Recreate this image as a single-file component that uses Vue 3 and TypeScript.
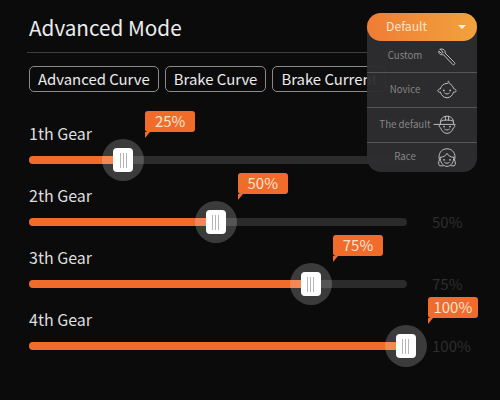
<script setup lang="ts">
interface Gear {
  name: string
  value: number
  pos: number
}

const tabs: string[] = ['Advanced Curve', 'Brake Curve', 'Brake Current']

const gears: Gear[] = [
  { name: '1th Gear', value: 25, pos: 24.9 },
  { name: '2th Gear', value: 50, pos: 49.4 },
  { name: '3th Gear', value: 75, pos: 74.6 },
  { name: '4th Gear', value: 100, pos: 99.7 },
]
</script>

<template>
  <div class="screen">
    <h1 class="title">Advanced Mode</h1>
    <div class="rule"></div>

    <div class="tabs">
      <span v-for="tab in tabs" :key="tab" class="tab">{{ tab }}</span>
    </div>

    <div class="gears">
      <div v-for="gear in gears" :key="gear.name" class="gear">
        <div class="gear-name">{{ gear.name }}</div>
        <div class="gear-line">
          <div class="track">
            <div class="fill" :style="{ width: gear.pos + '%' }"></div>
            <div class="knob" :style="{ left: gear.pos + '%' }">
              <div class="bubble">{{ gear.value }}%</div>
              <div class="halo"></div>
              <div class="grip"><i></i><i></i><i></i></div>
            </div>
          </div>
          <div class="readout">{{ gear.value }}%</div>
        </div>
      </div>
    </div>

    <div class="menu">
      <div class="menu-head">
        <span class="menu-head-text">Default</span>
        <b class="caret"></b>
      </div>
      <div class="menu-row first">
        <span class="menu-label">Custom</span>
        <svg class="icon" viewBox="0 0 20 20">
          <path d="M3.2 2.2 L6.2 5 L4.8 6.6 L1.8 4 C1.4 6.6 3.6 8.6 6.4 7.6 L15.6 17.4 C16.8 18.5 18.6 16.8 17.5 15.6 L8 6 C8.9 3.4 6.2 1.2 3.2 2.2 Z" />
        </svg>
      </div>
      <div class="menu-row">
        <span class="menu-label">Novice</span>
        <svg class="icon" viewBox="0 0 20 20">
          <path d="M3.4 8.6 C4.4 5.4 6.8 3.4 10 3.4 C10.9 3.4 12.2 3 12 1.8 C11.9 1 10.8 1 10.6 1.8 M3.4 8.6 C1.8 8.8 0.6 10 1 11.2 C1.3 12.2 2.4 12.4 3.4 12 C4.4 15.6 7 17.8 10 17.8 C13 17.8 15.6 15.6 16.6 12 C17.6 12.4 18.8 12.2 19 11.2 C19.3 10 18.2 8.8 16.6 8.6 C16 6.4 14.8 4.6 12.6 3.6" />
          <path d="M7.6 13 C8.8 14.4 11.2 14.4 12.4 13" />
          <circle class="dot" cx="6.8" cy="10.4" r="0.9" />
          <circle class="dot" cx="13.2" cy="10.4" r="0.9" />
        </svg>
      </div>
      <div class="menu-row">
        <span class="menu-label">The default</span>
        <svg class="icon" viewBox="0 0 20 20">
          <path d="M-3 9.4 H18 M3.4 9.4 C3 5 5 1.2 10 1.2 C15 1.2 17 5 16.6 9.4" />
          <path d="M8.4 1.4 V5 M11.6 1.4 V5 M3.6 6.2 C7 4.6 13 4.6 16.4 6.2" />
          <path d="M3.4 9.4 C1.8 10 1.6 12.2 3.6 12.8 C4.6 16 7 18.4 10 18.4 C13 18.4 15.4 16 16.4 12.8 C18.4 12.2 18.2 10 16.6 9.4" />
          <path d="M7.6 14.2 C8.8 15.4 11.2 15.4 12.4 14.2" />
          <circle class="dot" cx="7" cy="11.6" r="0.9" />
          <circle class="dot" cx="13" cy="11.6" r="0.9" />
        </svg>
      </div>
      <div class="menu-row last">
        <span class="menu-label">Race</span>
        <svg class="icon" viewBox="0 0 20 20">
          <path d="M2.4 12 C0.6 5.6 4.4 0.8 10 0.8 C15.6 0.8 19.4 5.6 17.6 12" />
          <path d="M3.2 9.4 C6.4 9.2 8.8 7.6 10 5.4 C11.2 7.6 13.6 9.2 16.8 9.4" />
          <path d="M3.2 9.4 C3 13.6 5.6 18.4 10 18.4 C14.4 18.4 17 13.6 16.8 9.4" />
          <path d="M2.4 12 C1.2 13.6 1.4 16.6 2.6 17.8 H5.8 M17.6 12 C18.8 13.6 18.6 16.6 17.4 17.8 H14.2" />
          <path d="M7.6 14.4 C8.8 15.6 11.2 15.6 12.4 14.4" />
          <circle class="dot" cx="7" cy="11.8" r="0.9" />
          <circle class="dot" cx="13" cy="11.8" r="0.9" />
        </svg>
      </div>
    </div>
  </div>
</template>

<style>
html,
body {
  margin: 0;
  background: #0b0b0c;
}
</style>

<style scoped>
.screen {
  position: relative;
  width: 500px;
  height: 400px;
  overflow: hidden;
  box-sizing: border-box;
  padding: 12px 27px 0 27px;
  background: #0b0b0c;
  color: #e9e9e9;
  font-family: "Noto Sans CJK SC", "Noto Sans", sans-serif;
}

.title {
  margin: 0 0 0 2px;
  height: 30px;
  font-size: 20.7px;
  line-height: 30px;
  font-weight: 400;
  color: #ececec;
}

.rule {
  margin-top: 10px;
  height: 1px;
  background: #3f3f3f;
}

.tabs {
  display: flex;
  gap: 6px;
  margin: 13px 0 0 2px;
}

.tab {
  flex: none;
  box-sizing: border-box;
  height: 26px;
  padding: 0 8px;
  border: 1px solid #8a8a8a;
  border-radius: 5px;
  font-size: 14.9px;
  line-height: 24px;
  color: #ececec;
  white-space: nowrap;
}

.gears {
  margin: 26px 0 0 2px;
}

.gear {
  height: 62px;
}

.gear-name {
  height: 30px;
  font-size: 16px;
  line-height: 30px;
  color: #dedede;
}

.gear-line {
  display: flex;
  align-items: center;
  height: 8px;
  margin-top: 8px;
}

.track {
  position: relative;
  flex: none;
  width: 378px;
  height: 8px;
  border-radius: 4px;
  background: #2b2b2b;
}

.fill {
  height: 100%;
  border-radius: 4px 0 0 4px;
  background: #f16b2b;
}

.knob {
  position: absolute;
  top: 4px;
  width: 0;
  height: 0;
}

.halo {
  position: absolute;
  left: -21px;
  top: -21px;
  width: 42px;
  height: 42px;
  border-radius: 50%;
  background: rgba(255, 255, 255, 0.2);
}

.grip {
  position: absolute;
  left: -10px;
  top: -12px;
  box-sizing: border-box;
  width: 20px;
  height: 24px;
  display: flex;
  justify-content: center;
  align-items: center;
  gap: 2px;
  border-radius: 4px;
  background: #fff;
}

.grip i {
  width: 1px;
  height: 15px;
  background: #b5b5b5;
}

.bubble {
  position: absolute;
  left: 22px;
  top: -49px;
  width: 50px;
  height: 21px;
  border-radius: 3px;
  background: #f16b2b;
  color: #fbe3d3;
  font-size: 15px;
  line-height: 20px;
  text-align: center;
}

.bubble::after {
  content: "";
  position: absolute;
  left: 0;
  top: 21px;
  border-style: solid;
  border-width: 6px 5px 0 0;
  border-color: #f16b2b transparent transparent transparent;
}

.readout {
  margin-left: 25px;
  font-size: 15px;
  line-height: 18px;
  color: #2e2e2e;
}

.menu {
  position: absolute;
  left: 367px;
  top: 13px;
  width: 110px;
  height: 159px;
  border-radius: 14px;
  background: rgba(46, 46, 48, 0.96);
}

.menu-head {
  display: flex;
  align-items: center;
  justify-content: space-between;
  box-sizing: border-box;
  height: 28px;
  padding: 0 11px 0 19px;
  border-radius: 14px;
  background: linear-gradient(90deg, #ef7c35, #f2a23c);
  color: #fde3c4;
  font-size: 12.2px;
}

.menu-head-text {
  margin-bottom: 2px;
}

.caret {
  width: 0;
  height: 0;
  border-style: solid;
  border-width: 4px 4px 0 4px;
  border-color: #fff3e0 transparent transparent transparent;
}

.menu-row {
  display: flex;
  align-items: center;
  box-sizing: border-box;
  height: 35px;
  padding-left: 6px;
  border-top: 1px solid #555;
}

.menu-row.first {
  height: 31px;
  border-top: none;
}

.menu-row.last {
  height: 30px;
}

.menu-label {
  width: 64px;
  flex: none;
  margin-bottom: 3px;
  font-size: 9.7px;
  color: #858585;
  text-align: center;
  white-space: nowrap;
}

.icon {
  width: 20px;
  height: 20px;
  flex: none;
  overflow: visible;
  fill: none;
  stroke: #bdbdbd;
  stroke-width: 1;
  stroke-linecap: round;
  stroke-linejoin: round;
}

.icon .dot {
  fill: #bdbdbd;
  stroke: none;
}
</style>
